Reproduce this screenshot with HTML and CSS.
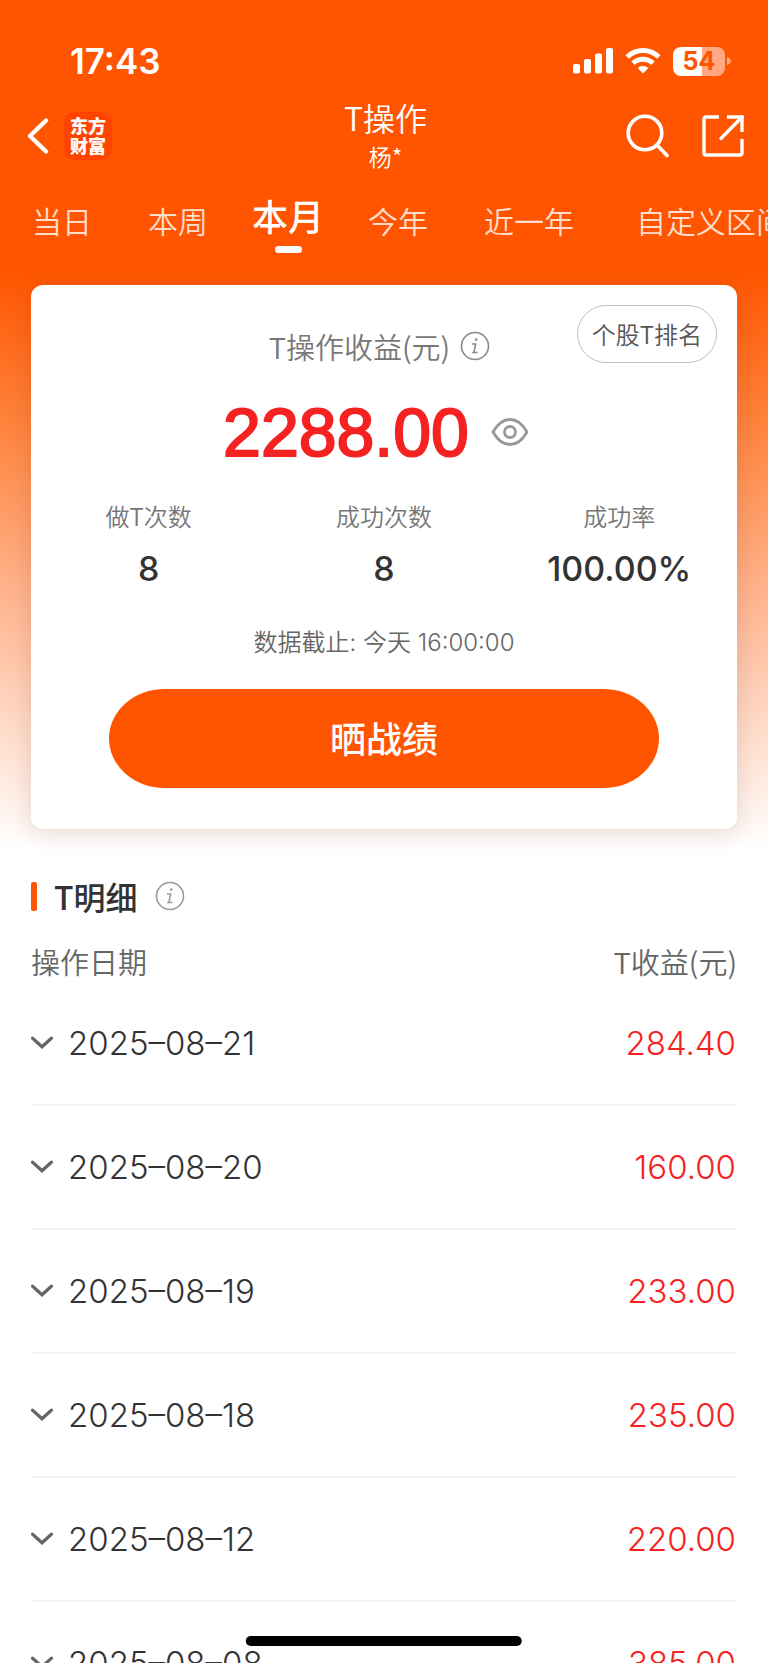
FILE: index.html
```html
<!DOCTYPE html>
<html lang="zh-CN">
<head>
<meta charset="utf-8">
<meta name="viewport" content="width=device-width, initial-scale=1">
<title>T操作</title>
<link rel="stylesheet" href="styles.css">
</head>
<body>
<svg class="defs" aria-hidden="true">
  <symbol id="info" viewBox="0 0 30 30">
    <circle cx="15" cy="15" r="13.5" fill="none" stroke="currentColor" stroke-width="1.6"/>
    <circle cx="16.2" cy="8.6" r="1.3" fill="currentColor"/>
    <path d="M12 12.9h3.7l-1.8 8.6h3.6M12.2 21.5h2" fill="none" stroke="currentColor" stroke-width="1.5"/>
  </symbol>
  <symbol id="chevron" viewBox="0 0 22 14">
    <path d="M1.600 2.200l9.400 8.600 9.400-8.600" fill="none" stroke="currentColor" stroke-width="3.200" stroke-linecap="round"/>
  </symbol>
</svg>
<div class="app">
  <header class="status">
    <time class="clock">17:43</time>
    <div class="status-icons">
      <svg width="40" height="26" viewBox="0 0 40 26" fill="#fff" aria-label="信号"><rect y="16" width="7" height="9.5" rx="2"/><rect x="11" y="11" width="7" height="14.5" rx="2"/><rect x="22" y="5.500" width="7" height="20" rx="2"/><rect x="33" width="7" height="25.500" rx="2"/></svg>
      <svg width="36" height="26" viewBox="0 0 36 26" aria-label="无线网络"><g fill="none" stroke="#fff" stroke-width="5"><path d="M2.200 9a22.500 22.500 0 0 1 31.600 0"/><path d="M8 15.200a14.500 14.500 0 0 1 20 0"/></g><path d="M18 25.500l-5.400-5.500a8 8 0 0 1 10.800 0z" fill="#fff"/></svg>
      <div class="battery"><span class="cell">54</span><svg width="4" height="8" viewBox="0 0 4 8"><path d="M0 0q4 1.500 4 4t-4 4z" fill="#ffa882"/></svg></div>
    </div>
  </header>
  <nav class="bar">
    <div class="side">
      <button class="icon" aria-label="返回"><svg width="22" height="36" viewBox="0 0 22 36" fill="none" stroke="#fff" stroke-width="4.400" stroke-linecap="round" stroke-linejoin="round"><path d="M19 2.500L3 18l16 15.500"/></svg></button>
      <a class="logo" href="#">东方<br>财富</a>
    </div>
    <div class="heading"><h1>T操作</h1><p>杨*</p></div>
    <div class="side side-end">
      <button class="icon" aria-label="搜索"><svg width="44" height="44" viewBox="0 0 44 44" fill="none" stroke="#fff" stroke-width="3.600" stroke-linecap="round"><circle cx="19" cy="19" r="16.800"/><path d="M31 31l10 10.500"/></svg></button>
      <button class="icon" aria-label="分享"><svg width="42" height="42" viewBox="0 0 42 42" fill="none" stroke="#fff" stroke-width="3.400"><path d="M17 2H4Q2 2 2 4v34q0 2 2 2h34q2 0 2-2V24M25 2h15v15"/><path d="M40 2L19 23.500" stroke-linecap="round"/></svg></button>
    </div>
  </nav>
  <div class="tabs" role="tablist">
    <button class="tab" role="tab">当日</button>
    <button class="tab" role="tab">本周</button>
    <button class="tab active" role="tab" aria-selected="true">本月</button>
    <button class="tab" role="tab">今年</button>
    <button class="tab" role="tab">近一年</button>
    <button class="tab custom" role="tab">自定义区间</button>
  </div>
  <main>
    <section class="card">
      <button class="rank">个股T排名</button>
      <div class="label">T操作收益(元)<svg class="info"><use href="#info"/></svg></div>
      <div class="total"><strong>2288.00</strong><button class="icon" aria-label="隐藏金额"><svg width="38" height="30" viewBox="0 0 38 30" fill="none" stroke="#999" stroke-width="2.800"><path d="M2 15Q9 2.500 19 2.500T36 15Q29 27.500 19 27.500T2 15z" stroke-linejoin="round"/><circle cx="19" cy="15" r="5.500"/></svg></button></div>
      <dl class="stats">
        <div><dt>做T次数</dt><dd>8</dd></div>
        <div><dt>成功次数</dt><dd>8</dd></div>
        <div><dt>成功率</dt><dd>100.00%</dd></div>
      </dl>
      <p class="asof">数据截止: 今天 16:00:00</p>
      <button class="share">晒战绩</button>
    </section>
    <section class="detail">
      <h2>T明细<svg class="info"><use href="#info"/></svg></h2>
      <table>
        <thead><tr><th scope="col">操作日期</th><th scope="col">T收益(元)</th></tr></thead>
        <tbody>
          <tr><td><button class="date"><svg><use href="#chevron"/></svg>2025–08–21</button></td><td>284.40</td></tr>
          <tr><td><button class="date"><svg><use href="#chevron"/></svg>2025–08–20</button></td><td>160.00</td></tr>
          <tr><td><button class="date"><svg><use href="#chevron"/></svg>2025–08–19</button></td><td>233.00</td></tr>
          <tr><td><button class="date"><svg><use href="#chevron"/></svg>2025–08–18</button></td><td>235.00</td></tr>
          <tr><td><button class="date"><svg><use href="#chevron"/></svg>2025–08–12</button></td><td>220.00</td></tr>
          <tr><td><button class="date"><svg><use href="#chevron"/></svg>2025–08–08</button></td><td>385.00</td></tr>
        </tbody>
      </table>
    </section>
  </main>
  <div class="home-indicator"></div>
</div>
</body>
</html>
```

FILE: styles.css
```css
:root {
  --orange: #ff5500;
  --red: #f52222;
  --cjk: "Noto Sans CJK SC", sans-serif;
  --num: Inter, "Noto Sans CJK SC", sans-serif;
}
* { box-sizing: border-box; }
body, h1, h2, p, dl, dd { margin: 0; }
body {
  font-family: var(--cjk);
  font-weight: 350;
  color: #333;
  background: #fff;
}
button {
  font: inherit;
  color: inherit;
  background: none;
  border: 0;
  padding: 0;
  cursor: pointer;
}
svg { display: block; flex: none; }
.defs { position: absolute; width: 0; height: 0; }
.app {
  display: flex;
  flex-direction: column;
  height: 100vh;
  overflow: hidden;
  background: linear-gradient(#ff5500 270px, #ff853f 430px, #ffb590 600px, #fff 850px);
}
.status {
  flex: none;
  display: flex;
  justify-content: space-between;
  align-items: center;
  height: 100px;
  padding: 22px 37px 0 70px;
  color: #fff;
}
.clock { font: 600 35px/40px var(--num); }
.status-icons { display: flex; align-items: center; gap: 12px; }
.battery { display: flex; align-items: center; gap: 2px; }
.cell {
  width: 52px;
  border-radius: 8px;
  background: linear-gradient(90deg, #fff 55%, #ffa882 55%);
  color: var(--orange);
  font: 700 25px/29px var(--num);
  text-align: center;
}
.bar {
  flex: none;
  display: flex;
  align-items: center;
  height: 72px;
  padding: 0 24px 0 27px;
  color: #fff;
}
.side { flex: 1; display: flex; align-items: center; gap: 15px; }
.side-end { justify-content: flex-end; gap: 32px; }
.logo {
  width: 48px;
  height: 48px;
  padding-top: 3px;
  border-radius: 10px;
  background: #ff4400;
  color: #fff;
  font-size: 18px;
  font-weight: 900;
  line-height: 20px;
  text-align: center;
  text-decoration: none;
}
.heading { text-align: center; }
.heading h1 { font-size: 32px; font-weight: 350; line-height: 40px; }
.heading p { font-size: 23px; line-height: 38px; }
.tabs {
  flex: none;
  display: flex;
  height: 98px;
  padding-left: 4px;
  overflow: hidden;
  color: #fff;
}
.tab {
  flex: none;
  display: flex;
  flex-direction: column;
  align-items: center;
  height: 98px;
  padding: 24px 28px 0;
  font-size: 30px;
  line-height: 48px;
  white-space: nowrap;
  color: #ffddcc;
}
.tab.active { padding: 19px 16px 0; font-size: 36px; font-weight: 500; color: #fff; }
.tab.active::after {
  content: "";
  width: 27px;
  height: 7px;
  margin-top: 7px;
  border-radius: 4px;
  background: #fff;
}
.tab.custom { padding-left: 34px; }
main { flex: 1; min-height: 0; padding: 15px 31px 0; overflow: hidden; }
.card {
  position: relative;
  display: flex;
  flex-direction: column;
  align-items: center;
  padding: 41px 0;
  border-radius: 12px;
  background: #fff;
  box-shadow: 0 4px 24px rgba(80, 30, 10, .14);
}
.rank {
  position: absolute;
  top: 20px;
  right: 20px;
  height: 58px;
  padding: 0 14px 2px;
  border: 1px solid #c0c0c0;
  border-radius: 29px;
  color: #555;
  font-size: 24px;
}
.info { width: 30px; height: 30px; color: #888; }
.label { display: flex; align-items: center; gap: 10px; padding-right: 9px; font-size: 29px; line-height: 40px; color: #777; }
.total { display: flex; align-items: center; gap: 22px; margin: 26px 0 24px; padding-right: 16px; }
.total strong {
  font: 400 68px/80px "Liberation Sans", sans-serif;
  color: var(--red);
  -webkit-text-stroke: 2px var(--red);
}
.stats { display: grid; grid-template-columns: repeat(3, 1fr); width: 100%; text-align: center; }
.stats dt { font-size: 24px; line-height: 40px; color: #777; }
.stats dd { margin-top: 12px; font: 500 34px/42px var(--num); }
.asof { margin: 33px 0 26px; font: 350 24px/40px var(--num); color: #666; }
.share {
  width: 78%;
  height: 99px;
  padding-bottom: 3px;
  border-radius: 56px / 50px;
  background: var(--orange);
  color: #fff;
  font-size: 36px;
  font-weight: 500;
}
.detail h2 {
  display: flex;
  align-items: center;
  margin-top: 43px;
  font-size: 32px;
  font-weight: 500;
  line-height: 48px;
}
.detail h2::before {
  content: "";
  width: 6px;
  height: 29px;
  margin-right: 17px;
  border-radius: 2px;
  background: var(--orange);
}
.detail h2 .info { margin-left: 17px; color: #999; }
table { width: 100%; border-collapse: collapse; }
th {
  height: 61px;
  padding: 20px 0 0;
  font-size: 29px;
  font-weight: 350;
  line-height: 40px;
  color: #666;
  text-align: left;
}
td { height: 124px; padding: 0; border-bottom: 2px solid #f2f2f2; font: 350 33px/40px var(--num); }
th:last-child, td:last-child { text-align: right; }
td:last-child { padding-right: 1px; color: var(--red); }
.date { display: flex; align-items: center; gap: 15px; }
.date svg { width: 22px; height: 14px; color: #666; }
.home-indicator {
  position: fixed;
  bottom: 17px;
  left: 50%;
  width: 36%;
  height: 10px;
  border-radius: 5px;
  background: #000;
  transform: translateX(-50%);
}
```
